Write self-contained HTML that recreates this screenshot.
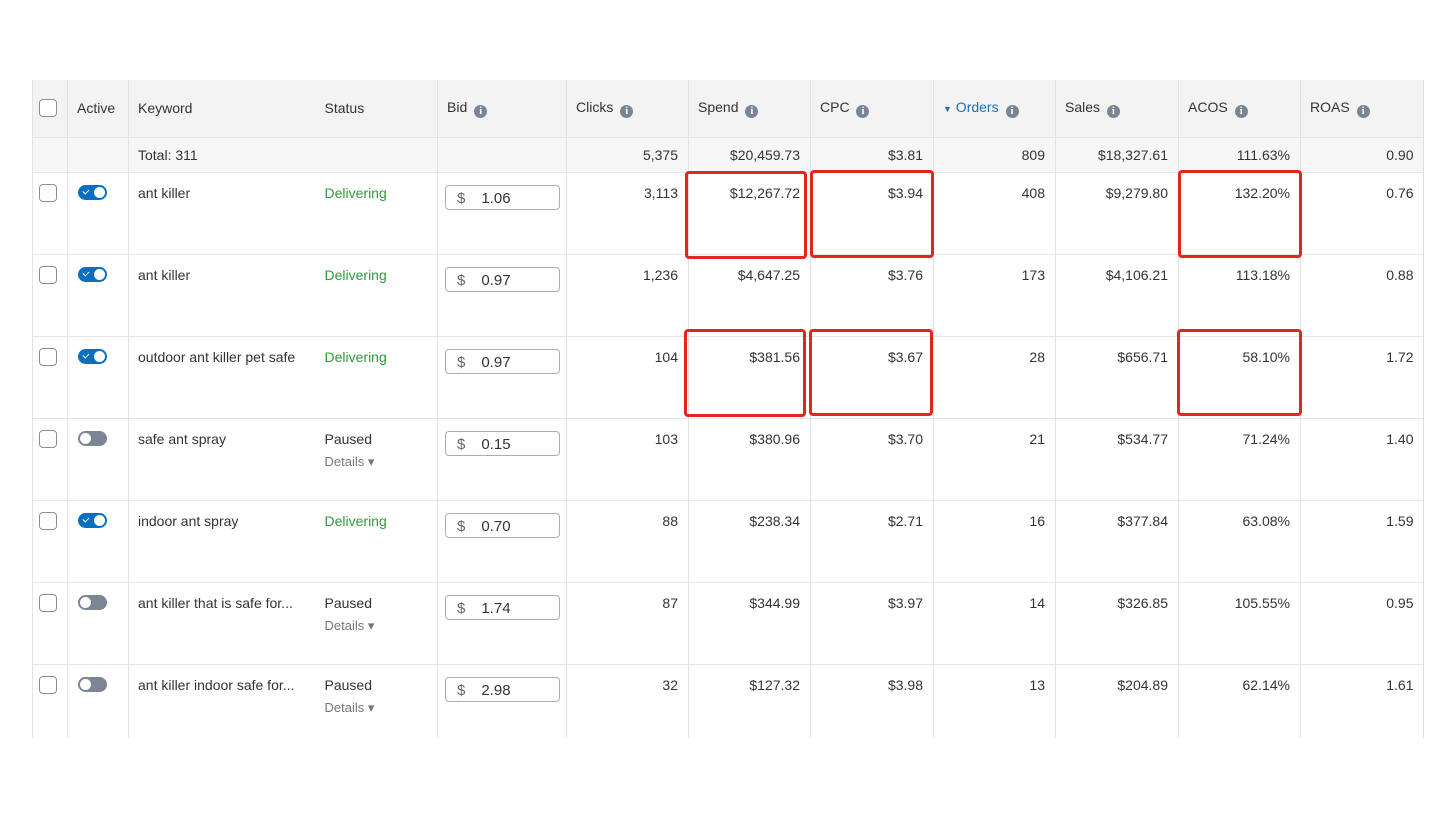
<!DOCTYPE html>
<html><head><meta charset="utf-8"><style>
*{margin:0;padding:0;box-sizing:border-box}
body{width:1456px;height:816px;background:#fff;font-family:"Liberation Sans",sans-serif;font-size:14px;color:#333;position:relative;overflow:hidden}
.wrap{position:absolute;left:32px;top:80px;width:1392px;height:658px;overflow:hidden;border-right:1px solid #ddd}
table{border-collapse:collapse;table-layout:fixed;width:1391px}
td{border-left:1px solid #e3e3e3;border-bottom:1px solid #e6e6e6;vertical-align:top;padding:0;white-space:nowrap;overflow:hidden}
td.nl{border-left:none}
tr.h td{height:57px;background:#f3f3f3;vertical-align:middle;padding-left:9px;color:#333}
tr.t td{height:35px;background:#f6f6f6;vertical-align:middle}
tr.d td{height:82px}
.r{text-align:right;padding-right:10px}
tr.d td.r{padding-top:12px}
.kw{padding:12px 0 0 9px}
.cb{width:18px;height:18px;border:1.5px solid #8a8f96;border-radius:4px;margin:11px 0 0 6px;background:#fff}
tr.h .cb{margin:0 0 0 -3px}
.tg{width:29px;height:15px;border-radius:8px;margin:12px 0 0 10px;position:relative;background:#7b8594}
.tg::after{content:"";position:absolute;top:2px;left:2px;width:11px;height:11px;border-radius:50%;background:#fff}
.tg.on{background:#0a6fc2}
.tg.on::after{left:16px}
.tg.on::before{content:"";position:absolute;left:5px;top:4px;width:5px;height:3px;border-left:1.5px solid #fff;border-bottom:1.5px solid #fff;transform:rotate(-45deg)}
.st{padding:12px 0 0 0}
.g{color:#2e9a3a}
.det{color:#777;font-size:13px;margin-top:7px}
.bid{margin:12px 0 0 7px;width:115px;height:25px;border:1px solid #a9aeb4;border-radius:4px;font-size:15px;padding:4px 0 0 11px;color:#333}
.bid span{color:#666;margin-right:16px}
.i{display:inline-block;width:13px;height:13px;border-radius:50%;background:#7a8594;color:#fff;font-size:10px;line-height:13px;text-align:center;font-weight:bold;vertical-align:-2px;margin-left:3px;font-family:"Liberation Serif",serif}
.box{position:absolute;border:3px solid #e0271f;border-radius:4px}
</style></head><body>
<div class="wrap"><table>
<colgroup><col style="width:35px"><col style="width:61px"><col style="width:196px"><col style="width:113px"><col style="width:129px"><col style="width:122px"><col style="width:122px"><col style="width:123px"><col style="width:122px"><col style="width:123px"><col style="width:122px"><col style="width:123px"></colgroup>
<tr class="h"><td style="border-left:1px solid #e3e3e3"><div class="cb"></div></td><td>Active</td><td>Keyword</td><td class="nl" style="padding-left:0">Status</td><td>Bid <span class="i">i</span></td><td>Clicks <span class="i">i</span></td><td>Spend <span class="i">i</span></td><td>CPC <span class="i">i</span></td><td style="color:#1f6fb3"><span style="font-size:9px">&#9660;</span> Orders <span class="i">i</span></td><td>Sales <span class="i">i</span></td><td>ACOS <span class="i">i</span></td><td>ROAS <span class="i">i</span></td></tr>
<tr class="t"><td></td><td></td><td style="padding-left:9px">Total: 311</td><td class="nl"></td><td></td><td class="r">5,375</td><td class="r">$20,459.73</td><td class="r">$3.81</td><td class="r">809</td><td class="r">$18,327.61</td><td class="r">111.63%</td><td class="r">0.90</td></tr>
<tr class="d"><td><div class="cb"></div></td><td><div class="tg on"></div></td><td class="kw">ant killer</td><td class="nl st g">Delivering</td><td><div class="bid"><span>$</span>1.06</div></td><td class="r">3,113</td><td class="r">$12,267.72</td><td class="r">$3.94</td><td class="r">408</td><td class="r">$9,279.80</td><td class="r">132.20%</td><td class="r">0.76</td></tr>
<tr class="d"><td><div class="cb"></div></td><td><div class="tg on"></div></td><td class="kw">ant killer</td><td class="nl st g">Delivering</td><td><div class="bid"><span>$</span>0.97</div></td><td class="r">1,236</td><td class="r">$4,647.25</td><td class="r">$3.76</td><td class="r">173</td><td class="r">$4,106.21</td><td class="r">113.18%</td><td class="r">0.88</td></tr>
<tr class="d"><td><div class="cb"></div></td><td><div class="tg on"></div></td><td class="kw">outdoor ant killer pet safe</td><td class="nl st g">Delivering</td><td><div class="bid"><span>$</span>0.97</div></td><td class="r">104</td><td class="r">$381.56</td><td class="r">$3.67</td><td class="r">28</td><td class="r">$656.71</td><td class="r">58.10%</td><td class="r">1.72</td></tr>
<tr class="d"><td><div class="cb"></div></td><td><div class="tg"></div></td><td class="kw">safe ant spray</td><td class="nl st">Paused<div class="det">Details &#9662;</div></td><td><div class="bid"><span>$</span>0.15</div></td><td class="r">103</td><td class="r">$380.96</td><td class="r">$3.70</td><td class="r">21</td><td class="r">$534.77</td><td class="r">71.24%</td><td class="r">1.40</td></tr>
<tr class="d"><td><div class="cb"></div></td><td><div class="tg on"></div></td><td class="kw">indoor ant spray</td><td class="nl st g">Delivering</td><td><div class="bid"><span>$</span>0.70</div></td><td class="r">88</td><td class="r">$238.34</td><td class="r">$2.71</td><td class="r">16</td><td class="r">$377.84</td><td class="r">63.08%</td><td class="r">1.59</td></tr>
<tr class="d"><td><div class="cb"></div></td><td><div class="tg"></div></td><td class="kw">ant killer that is safe for...</td><td class="nl st">Paused<div class="det">Details &#9662;</div></td><td><div class="bid"><span>$</span>1.74</div></td><td class="r">87</td><td class="r">$344.99</td><td class="r">$3.97</td><td class="r">14</td><td class="r">$326.85</td><td class="r">105.55%</td><td class="r">0.95</td></tr>
<tr class="d"><td><div class="cb"></div></td><td><div class="tg"></div></td><td class="kw">ant killer indoor safe for...</td><td class="nl st">Paused<div class="det">Details &#9662;</div></td><td><div class="bid"><span>$</span>2.98</div></td><td class="r">32</td><td class="r">$127.32</td><td class="r">$3.98</td><td class="r">13</td><td class="r">$204.89</td><td class="r">62.14%</td><td class="r">1.61</td></tr>
</table></div>
<div class="box" style="left:685px;top:171px;width:122px;height:88px"></div>
<div class="box" style="left:810px;top:170px;width:124px;height:88px"></div>
<div class="box" style="left:1178px;top:170px;width:124px;height:88px"></div>
<div class="box" style="left:684px;top:329px;width:122px;height:88px"></div>
<div class="box" style="left:809px;top:329px;width:124px;height:87px"></div>
<div class="box" style="left:1177px;top:329px;width:125px;height:87px"></div>
</body></html>
